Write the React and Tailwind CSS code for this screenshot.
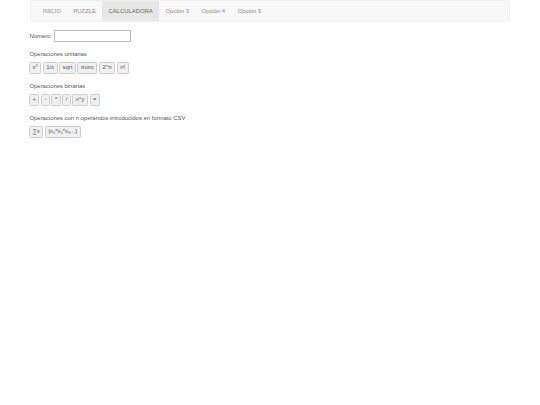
const navItems = ["INICIO", "PUZZLE", "CALCULADORA", "Opción 3", "Opción 4", "Opción 5"];

function OpButton({ children }) {
  return (
    <button className="h-[12px] px-[2.5px] border border-[#cdcdcd] rounded-[1.5px] bg-[#f0f0f0] text-[5.9px] leading-none text-[#555] flex items-center">
      {children}
    </button>
  );
}

function Section({ title, children }) {
  return (
    <div>
      <p className="text-[5.9px] leading-[8px] text-[#555] mb-[4px]">{title}</p>
      <div className="flex gap-[1.5px] -ml-[0.5px]">{children}</div>
    </div>
  );
}

export default function App() {
  return (
    <div className="w-[540px] h-[405px] bg-white overflow-hidden font-['Liberation_Sans',sans-serif]">
      <div className="mx-[30px] h-[21.5px] flex pl-[5.5px] bg-[#f8f8f8] border border-[#f0f0f0] rounded-[1.5px]">
        {navItems.map((item) => (
          <a
            key={item}
            className={`flex items-center pt-[1px] px-[6.3px] text-[5.9px] ${
              item === "CALCULADORA" ? "bg-[#e7e7e7] text-[#666]" : "text-[#8a8a8a]"
            }`}
          >
            {item}
          </a>
        ))}
      </div>

      <div className="ml-[29.5px] mr-[30px] mt-[8.5px] flex flex-col gap-[8px]">
        <div className="flex items-center gap-[1.5px] text-[5.9px] text-[#555]">
          <span>Número:</span>
          <input className="w-[77px] h-[12px] bg-white border border-[#b5b5b5] rounded-[1px]" />
        </div>

        <Section title="Operaciones unitarias">
          <OpButton>
            <span>
              x<sup className="text-[4px]">2</sup>
            </span>
          </OpButton>
          <OpButton>1/x</OpButton>
          <OpButton>sqrt</OpButton>
          <OpButton>trunc</OpButton>
          <OpButton>2^n</OpButton>
          <OpButton>n!</OpButton>
        </Section>

        <Section title="Operaciones binarias">
          <OpButton>+</OpButton>
          <OpButton>-</OpButton>
          <OpButton>*</OpButton>
          <OpButton>/</OpButton>
          <OpButton>x^y</OpButton>
          <OpButton>=</OpButton>
        </Section>

        <Section title="Operaciones con n operandos introducidos en formato CSV">
          <OpButton>∑x</OpButton>
          <OpButton>
            <span>
              {"{x"}
              <sub className="text-[4px]">1</sub>
              {"*x"}
              <sub className="text-[4px]">2</sub>
              {"*x"}
              <sub className="text-[4px]">3</sub>
              {"...}"}
            </span>
          </OpButton>
        </Section>
      </div>
    </div>
  );
}
